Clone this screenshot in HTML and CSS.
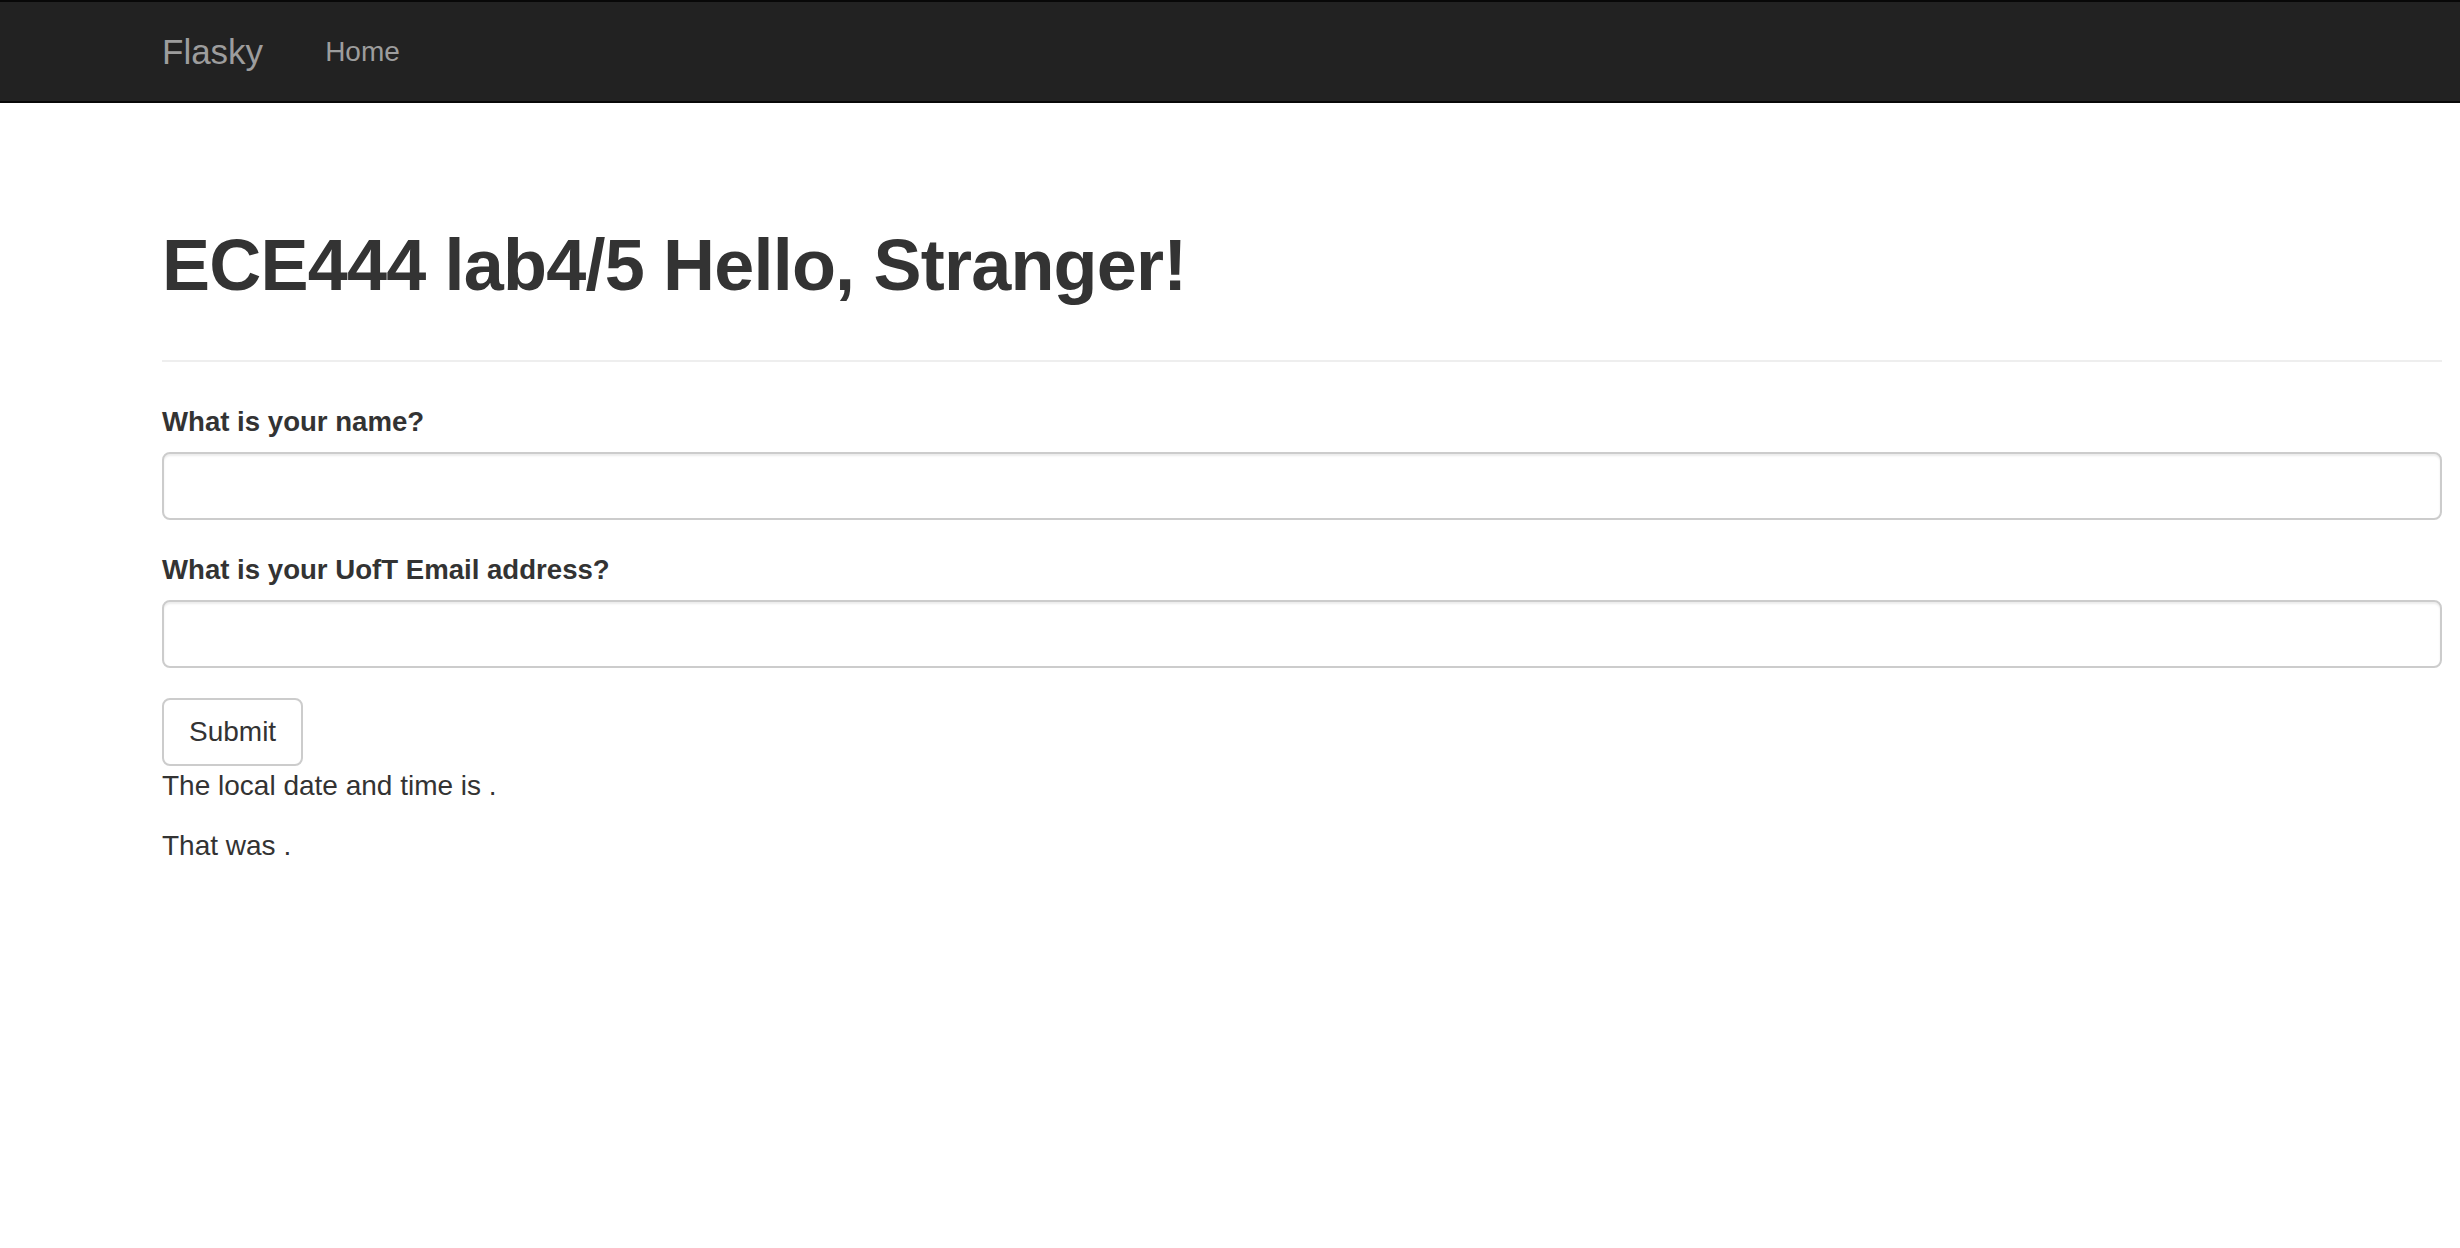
FILE: index.html
```html
<!DOCTYPE html>
<html lang="en">
<head>
<meta charset="utf-8">
<title>Flasky</title>
<link rel="stylesheet" href="styles.css">
</head>
<body>
<nav class="navbar">
  <div class="container navbar-inner">
    <a class="brand" href="#">Flasky</a>
    <ul class="nav">
      <li><a class="nav-link" href="#">Home</a></li>
    </ul>
  </div>
</nav>
<main class="container">
  <div class="page-header">
    <h1>ECE444 lab4/5 Hello, Stranger!</h1>
  </div>
  <form class="form">
    <div class="form-group">
      <label class="control-label" for="name">What is your name?</label>
      <input class="form-control" id="name" type="text">
    </div>
    <div class="form-group">
      <label class="control-label" for="email">What is your UofT Email address?</label>
      <input class="form-control" id="email" type="text">
    </div>
    <button class="btn" type="button">Submit</button>
  </form>
  <p class="info">The local date and time is .</p>
  <p class="info">That was .</p>
</main>
</body>
</html>
```

FILE: styles.css
```css
html, body {
  margin: 0;
  padding: 0;
  background: #ffffff;
}
body {
  font-family: "Liberation Sans", Arial, Helvetica, sans-serif;
  font-size: 28px;
  line-height: 40px;
  color: #333333;
}
.container {
  width: 2280px;
  margin: 0 18px 0 162px;
}
.navbar {
  background: #222222;
  border-top: 2px solid #080808;
  border-bottom: 2px solid #080808;
  height: 99px;
}
.navbar-inner {
  display: flex;
  align-items: flex-start;
}
.brand {
  display: block;
  padding: 30px 62px 0 0;
  font-size: 35px;
  line-height: 40px;
  color: #9d9d9d;
  text-decoration: none;
}
.nav {
  list-style: none;
  margin: 0;
  padding: 0;
  display: flex;
}
.nav-link {
  display: block;
  padding: 30px 30px 0 0;
  font-size: 28px;
  line-height: 40px;
  color: #9d9d9d;
  text-decoration: none;
}
.page-header {
  margin-top: 122px;
  padding-bottom: 55px;
  border-bottom: 2px solid #eeeeee;
  margin-bottom: 40px;
}
.page-header h1 {
  margin: 0;
  font-size: 72px;
  line-height: 80px;
  font-weight: 700;
  letter-spacing: -0.8px;
  color: #333333;
}
.form {
  margin: 0;
}
.form-group {
  margin-bottom: 30px;
}
.control-label {
  display: block;
  font-size: 27.6px;
  font-weight: 700;
  line-height: 40px;
  margin-bottom: 10px;
}
.form-control {
  display: block;
  box-sizing: border-box;
  width: 100%;
  height: 68px;
  margin: 0;
  padding: 12px 24px;
  font-family: inherit;
  font-size: 28px;
  border: 2px solid #cccccc;
  border-radius: 8px;
  background: #ffffff;
  box-shadow: inset 0 2px 2px rgba(0, 0, 0, 0.075);
  outline: none;
}
.btn {
  display: block;
  box-sizing: border-box;
  height: 68px;
  margin: 0;
  padding: 12px 25px;
  font-family: inherit;
  font-size: 28px;
  line-height: 40px;
  color: #333333;
  background: #ffffff;
  border: 2px solid #cccccc;
  border-radius: 8px;
}
.info {
  margin: 0 0 20px;
}
```
